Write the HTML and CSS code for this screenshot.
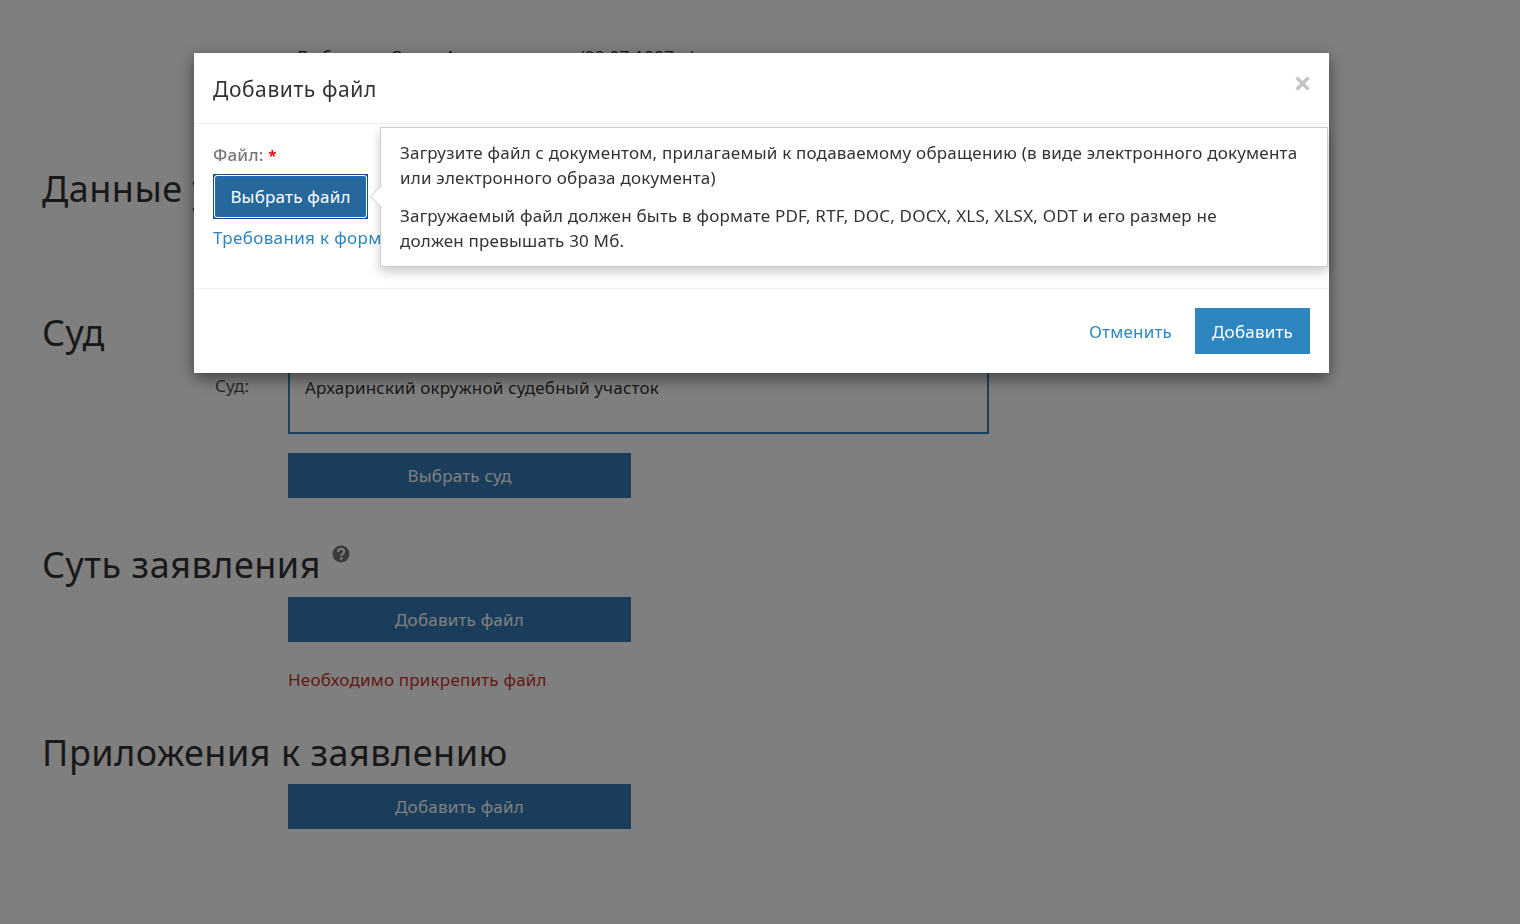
FILE: index.html
```html
<!DOCTYPE html>
<html lang="ru">
<head>
<meta charset="UTF-8">
<title>Добавить файл</title>
<link rel="stylesheet" href="styles.css">
</head>
<body>
<!-- страница под модальным окном -->
<div class="page">
    <div class="applicant">Любимова Ольга Александровна (22.07.1987 г.)</div>
    <h2 class="section-title title-data">Данные участников</h2>
    <h2 class="section-title title-court">Суд</h2>
    <div class="court-row">
        <label class="court-label">Суд:</label>
        <div class="court-box">Архаринский окружной судебный участок</div>
    </div>
    <div class="form-row"><button class="page-button">Выбрать суд</button></div>
    <h2 class="section-title title-essence">Суть заявления
        <svg class="help-icon" viewBox="0 0 18 18" width="18" height="18"><circle cx="9" cy="9" r="8.500" fill="#777"/><path d="M6 7c0-4.200 6.200-4 6.200-.4 0 2.400-3 2-3 4.400" fill="none" stroke="#fff" stroke-width="2"/><rect x="8" y="12.300" width="2.400" height="2.400" fill="#fff"/></svg>
    </h2>
    <div class="form-row"><button class="page-button">Добавить файл</button></div>
    <div class="form-row error-text">Необходимо прикрепить файл</div>
    <h2 class="section-title title-attach">Приложения к заявлению</h2>
    <div class="form-row"><button class="page-button">Добавить файл</button></div>
</div>

<div class="backdrop"></div>

<!-- модальное окно -->
<div class="modal">
    <div class="modal-header">
        <h4 class="modal-title">Добавить файл</h4>
        <span class="modal-close">×</span>
    </div>
    <div class="modal-body">
        <div class="file-label">Файл: <span class="required">*</span></div>
        <button class="choose-button">Выбрать файл</button>
        <a class="req-link" href="#">Требования к формату файла</a>
        <div class="popover">
            <div class="popover-arrow"></div>
            <p>Загрузите файл с документом, прилагаемый к подаваемому обращению (в виде электронного документа или электронного образа документа)</p>
            <p>Загружаемый файл должен быть в формате PDF, RTF, DOC, DOCX, XLS, XLSX, ODT и его размер не<br>должен превышать 30 Мб.</p>
        </div>
    </div>
    <div class="modal-footer">
        <a class="cancel-link" href="#">Отменить</a>
        <button class="add-button">Добавить</button>
    </div>
</div>
</body>
</html>
```
FILE: styles.css
```css
/* общие стили */
html, body {
    margin: 0;
    padding: 0;
    height: 100%;
    overflow: hidden;
    background: #fff;
    font-family: "Noto Sans", "Open Sans", sans-serif;
    font-size: 17px;
    letter-spacing: 0.2px;
    color: #333;
}

.page {
    padding: 45px 0 0 42px;
}

.applicant {
    margin-left: 254px;
    line-height: 24px;
}

.section-title {
    margin: 0;
    font-size: 36px;
    font-weight: 400;
    letter-spacing: 0.5px;
    line-height: 44px;
    white-space: nowrap;
}

.title-data { margin-top: 98px; }
.title-court { margin-top: 100px; }
.title-essence { margin-top: 45px; }
.title-attach { margin-top: 39px; }

.court-row {
    display: flex;
    margin-top: 1px;
}

.court-label {
    flex: none;
    width: 73px;
    margin-left: 173px;
    padding-top: 18px;
    line-height: 24px;
    color: #555;
}

.court-box {
    box-sizing: border-box;
    width: 701px;
    height: 78px;
    padding: 18px 15px 0;
    border: 2px solid #2e86c1;
    line-height: 24px;
}

.form-row {
    margin-left: 246px;
}

.page-button {
    display: block;
    width: 343px;
    height: 45px;
    margin-top: 19px;
    border: none;
    background: #337ab7;
    color: #fff;
    font-family: inherit;
    font-size: 17px;
    letter-spacing: 0.2px;
}

.title-essence + .form-row .page-button {
    margin-top: 10px;
}

.title-attach + .form-row .page-button {
    margin-top: 9px;
}

.error-text {
    margin-top: 26px;
    line-height: 24px;
    color: #c9302c;
}

.help-icon {
    vertical-align: 15px;
    margin-left: 1px;
}

/* затемнение */
.backdrop {
    position: fixed;
    top: 0;
    left: 0;
    width: 100%;
    height: 100%;
    background: rgba(0, 0, 0, 0.5);
}

/* модальное окно */
.modal {
    position: fixed;
    top: 53px;
    left: 194px;
    width: 1135px;
    background: #fff;
    box-shadow: 0 5px 15px rgba(0, 0, 0, 0.5);
}

.modal-header {
    display: flex;
    justify-content: space-between;
    height: 70px;
    padding: 0 19px;
    border-bottom: 1px solid #eee;
}

.modal-title {
    margin: 0;
    font-size: 21px;
    font-weight: 400;
    letter-spacing: 0.6px;
    line-height: 72px;
}

.modal-close {
    margin: 11px -2px 0 0;
    font-size: 32px;
    font-weight: 700;
    line-height: 38px;
    color: #c4c4c4;
}

.modal-body {
    position: relative;
    height: 145px;
    padding: 19px 19px 0;
    border-bottom: 1px solid #eee;
}

.file-label {
    font-weight: 500;
    line-height: 24px;
    color: #777;
}

.required {
    font-size: 15px;
    font-weight: 700;
    color: #f00;
}

/* кнопка в фокусе: рамка браузера поверх заливки */
.choose-button {
    position: relative;
    display: block;
    width: 155px;
    height: 45px;
    margin-top: 7px;
    border: none;
    background: #26689c;
    outline: 1px solid #1c4d7c;
    outline-offset: -1px;
    color: #fff;
    font-family: inherit;
    font-size: 17px;
    letter-spacing: 0.2px;
}

.choose-button::after {
    content: '';
    position: absolute;
    top: 1px;
    left: 1px;
    right: 1px;
    bottom: 1px;
    border: 1px solid #fff;
    border-radius: 3px;
    box-shadow: inset 0 0 0 1px #1a6cc4;
}

.req-link {
    display: block;
    margin-top: 7px;
    line-height: 24px;
    letter-spacing: 0.35px;
    color: #2e86c1;
    text-decoration: none;
    white-space: nowrap;
}

.popover {
    position: absolute;
    top: 3px;
    left: 186px;
    box-sizing: border-box;
    width: 948px;
    height: 140px;
    padding: 12px 22px 13px 19px;
    background: #fff;
    border: 1px solid #ccc;
    box-shadow: 0 5px 10px rgba(0, 0, 0, 0.2);
    line-height: 25px;
}

.popover p {
    margin: 0 0 13px;
}

.popover-arrow {
    position: absolute;
    top: 60px;
    left: -8px;
    width: 17px;
    height: 17px;
    background: #fff;
    border-left: 1px solid #ccc;
    border-bottom: 1px solid #ccc;
    box-sizing: border-box;
    transform: rotate(45deg);
    clip-path: polygon(0 0, 100% 100%, 0 100%);
}

.modal-footer {
    display: flex;
    justify-content: flex-end;
    align-items: center;
    gap: 23px;
    height: 84px;
    padding: 0 19px;
}

.cancel-link {
    color: #2e86c1;
    text-decoration: none;
}

.add-button {
    width: 115px;
    height: 46px;
    border: none;
    background: #2e86c1;
    color: #fff;
    font-family: inherit;
    font-size: 17px;
    letter-spacing: 0.2px;
}
```
